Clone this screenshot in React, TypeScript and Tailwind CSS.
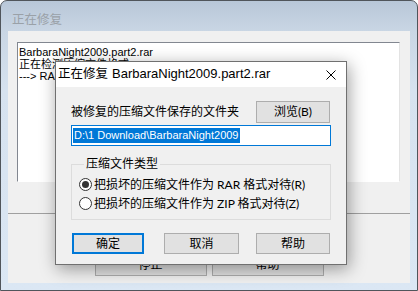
const ui = "font-['Lato','Noto_Sans_CJK_SC',sans-serif]";
const latin = "font-['Liberation_Sans',sans-serif]";

function Radio({ checked }: { checked: boolean }) {
  return (
    <span className="flex h-[13px] w-[13px] shrink-0 items-center justify-center rounded-full border border-[#333333] bg-white">
      {checked && <span className="h-[7px] w-[7px] rounded-full bg-[#333333]" />}
    </span>
  );
}

function RepairDialog() {
  return (
    <div
      className={`absolute left-[55px] top-[61px] flex h-[204px] w-[292px] flex-col border border-[#707070] bg-[#f0f0f0] shadow-[2px_4px_16px_rgba(0,0,0,0.38)] ${ui} text-black`}
    >
      {/* title bar */}
      <div className="flex h-[25px] shrink-0 items-center justify-between bg-white pl-[2px] pr-[10px]">
        <div className="flex items-baseline whitespace-nowrap">
          <span className="text-[12.5px]">正在修复</span>
          <span className={`ml-[4px] text-[13px] leading-[18px] ${latin}`}>BarbaraNight2009.part2.rar</span>
        </div>
        <svg width="10" height="10" viewBox="0 0 10 10">
          <path d="M0.5 0.5 L9.5 9.5 M9.5 0.5 L0.5 9.5" stroke="#000" strokeWidth="1" />
        </svg>
      </div>

      {/* body */}
      <div className="flex flex-1 flex-col px-[15px] text-[12px] leading-[16px]">
        <div className="mt-[14px] flex h-[22px] items-center justify-between">
          <span>被修复的压缩文件保存的文件夹</span>
          <button className="mr-[1px] h-[22px] w-[74px] border border-[#adadad] bg-[#e1e1e1]">浏览(B)</button>
        </div>

        <div className="mt-[2px] flex h-[21px] items-center border border-[#0078d7] bg-white pl-[1px]">
          <span className={`bg-[#0078d7] px-[1px] text-[11px] leading-[15px] text-white ${latin}`}>D:\1 Download\BarbaraNight2009</span>
        </div>

        <fieldset className="mt-[10px] border border-[#dcdcdc] pb-[6px] pl-[7px] pt-[3px]">
          <legend className="ml-[5px] px-[2px]">压缩文件类型</legend>
          <label className="flex h-[19px] items-center gap-[2px]">
            <Radio checked />
            <span>把损坏的压缩文件作为 RAR 格式对待(R)</span>
          </label>
          <label className="flex h-[19px] items-center gap-[2px]">
            <Radio checked={false} />
            <span>把损坏的压缩文件作为 ZIP 格式对待(Z)</span>
          </label>
        </fieldset>

        <div className="mt-[13px] flex h-[21px]">
          <button className="ml-[1px] w-[72px] border-2 border-[#0078d7] bg-[#e1e1e1]">确定</button>
          <button className="ml-[20px] w-[75px] border border-[#adadad] bg-[#e1e1e1]">取消</button>
          <button className="ml-[17px] w-[74px] border border-[#adadad] bg-[#e1e1e1]">帮助</button>
        </div>
      </div>
    </div>
  );
}

export default function App() {
  return (
    <div className="relative h-[291px] w-[418px] overflow-hidden bg-white">
      <div className="flex h-full w-full flex-col rounded-t-[7px] border border-[#50555b] bg-[linear-gradient(to_bottom,#b8c7d8_0px,#c9d6e4_30px,#d6e2ef_90px,#dbe7f4_100%)] pb-[7px] pl-[7px] pr-[7px]">
        <div className={`flex h-[30px] shrink-0 items-center pl-[4px] pt-[8px] text-[12.5px] text-[#9aa1a8] ${ui}`}>
          正在修复
        </div>

        <div className="flex flex-1 flex-col bg-[#f0f0f0]">
          <div className="ml-[9px] mr-[10px] mt-[11px] h-[140px] border border-b-white border-l-[#828790] border-r-[#e3e3e3] border-t-[#828790] bg-white pl-[1px] pt-[3px] font-['Liberation_Sans','Noto_Sans_CJK_SC',sans-serif] text-[11px] leading-[12px]">
            <div>BarbaraNight2009.part2.rar</div>
            <div>正在检测压缩文件格式</div>
            <div>---&gt; RAR 格式</div>
          </div>

          <div className="mt-[31px] h-px bg-[#a0a0a0]" />

          <div className={`mt-[40px] flex justify-center gap-[5px] ${ui} text-[12px]`}>
            <button className="h-[22px] w-[112px] border border-[#adadad] bg-[#e1e1e1]">停止</button>
            <button className="h-[22px] w-[112px] border border-[#adadad] bg-[#e1e1e1]">帮助</button>
          </div>
        </div>
      </div>

      <RepairDialog />
    </div>
  );
}
